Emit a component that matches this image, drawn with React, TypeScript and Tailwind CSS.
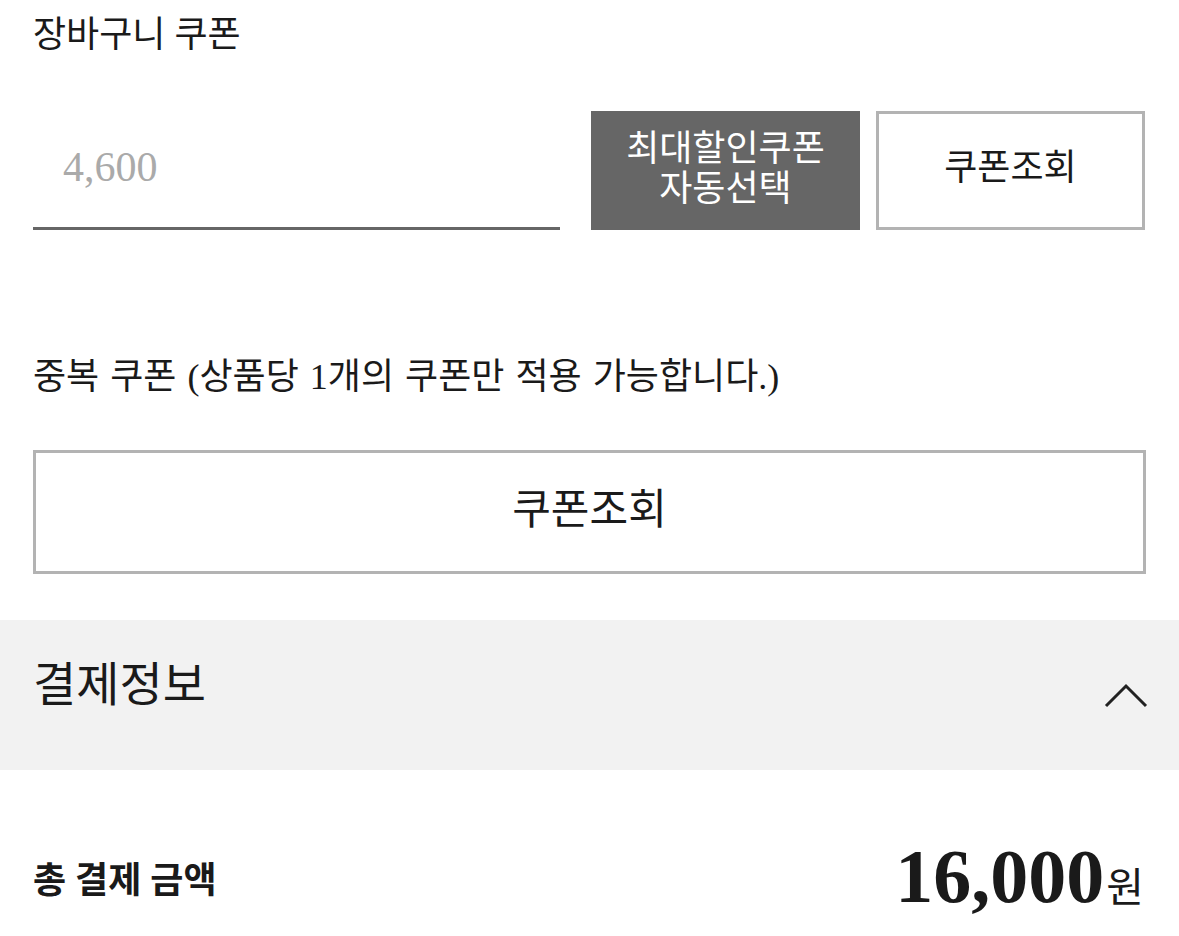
import React from "react";

const font = { fontFamily: '"Liberation Serif", "Noto Sans CJK KR", serif' };

export default function App() {
  return (
    <div className="w-[1179px] h-[936px] bg-white text-[#1a1a1a] overflow-hidden" style={font}>
      <div className="px-[33px]">
        <div className="pt-[15px] h-[55px] text-[36px] leading-[40px]">장바구니 쿠폰</div>
        <div className="mt-[56px] flex h-[119px]">
          <div className="w-[527px] border-b-[3px] border-[#666666] flex items-center pl-[30px]">
            <span className="text-[42px] text-[#aaaaaa] leading-none mt-[-4px]">4,600</span>
          </div>
          <button className="ml-[31px] w-[269px] bg-[#666666] text-white text-[36px] leading-[40px] flex flex-col items-center justify-center pb-[4px]">
            <span>최대할인쿠폰</span>
            <span>자동선택</span>
          </button>
          <button className="ml-[16px] w-[269px] border-[3px] border-[#b3b3b3] bg-white text-[36px] leading-[40px] flex items-center justify-center pb-[6px]">
            쿠폰조회
          </button>
        </div>
        <div className="mt-[127px] text-[36px] leading-[40px] [word-spacing:2px]">중복 쿠폰 (상품당 1개의 쿠폰만 적용 가능합니다.)</div>
        <button className="mt-[53px] w-full h-[124px] border-[3px] border-[#b3b3b3] bg-white text-[42px] flex items-center justify-center pb-[4px]">
          쿠폰조회
        </button>
      </div>
      <div className="mt-[46px] h-[150px] bg-[#f2f2f2] flex items-center justify-between px-[33px]">
        <span className="text-[47px] leading-[50px] mt-[-20px]">결제정보</span>
        <svg width="46" height="28" viewBox="0 0 46 28" className="mt-[2px] mr-[-3px]">
          <path d="M3 24 L23 4 L43 24" fill="none" stroke="#222" strokeWidth="3" />
        </svg>
      </div>
      <div className="px-[33px] mt-[68px] flex items-center justify-between">
        <span className="text-[36px] font-bold leading-[40px] mt-[4px]">총 결제 금액</span>
        <span className="flex items-baseline mr-[2px]">
          <span className="text-[76px] font-bold leading-none">16,000</span>
          <span className="text-[41px] ml-[2px]">원</span>
        </span>
      </div>
    </div>
  );
}
